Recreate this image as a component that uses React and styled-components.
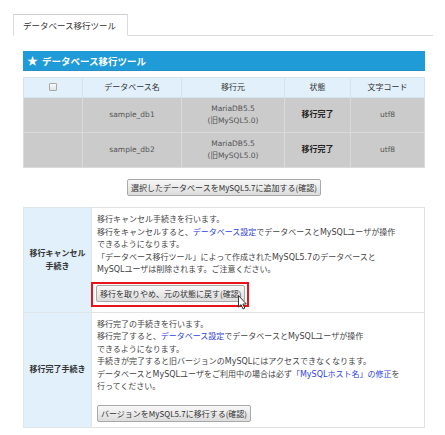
import React from 'react';
import styled, { createGlobalStyle } from 'styled-components';

const GlobalStyle = createGlobalStyle`
  body {
    margin: 0;
    background: #fff;
    font-family: "DejaVu Sans", "Noto Sans CJK JP", sans-serif;
    font-size: 8px;
    color: #444;
  }
`;

const ROWS = [
  { name: 'sample_db1', from: ['MariaDB5.5', '(旧MySQL5.0)'], status: '移行完了', charset: 'utf8' },
  { name: 'sample_db2', from: ['MariaDB5.5', '(旧MySQL5.0)'], status: '移行完了', charset: 'utf8' },
];

const Page = styled.div`
  padding: 14px 12px 12px 13px;
`;

const TabBar = styled.div`
  display: flex;
  border-bottom: 1px solid #dcdcdc;
`;

const Tab = styled.div`
  width: 115px;
  height: 22px;
  margin-bottom: -1px;
  display: flex;
  align-items: center;
  padding-left: 9px;
  box-sizing: border-box;
  background: #fff;
  border: 1px solid #dcdcdc;
  border-bottom-color: #fff;
  border-top-color: #d0d0d0;
  font-family: "Noto Sans CJK JP", sans-serif;
  font-size: 8.5px;
  color: #333;
`;

const Content = styled.div`
  padding: 15px 8px 0 10px;
`;

const Heading = styled.div`
  height: 20px;
  display: flex;
  align-items: center;
  gap: 4px;
  padding-left: 4px;
  background: #1f9bd8;
  border-bottom: 1px solid #2a8fc4;
  box-sizing: border-box;
  color: #fff;
  font-family: "Noto Sans CJK JP", sans-serif;
  font-weight: bold;
  font-size: 9.5px;
`;

const Star = styled.span`
  font-size: 11px;
  line-height: 1;
`;

const ListTable = styled.table`
  width: 100%;
  margin-top: 6px;
  border-collapse: collapse;
  table-layout: fixed;
`;

const HeadCell = styled.th`
  height: 19px;
  padding: 0;
  background: #e1f0fa;
  border: 1px solid #d4e4ee;
  font-weight: normal;
  color: #333;
  text-align: center;
  line-height: 12px;
`;

const Cell = styled.td`
  height: 34px;
  padding: 0;
  background: #cbcbcb;
  border: 1px solid #dadada;
  text-align: center;
  font-size: ${(p) => (p.strong ? '8px' : '7.5px')};
  line-height: 12px;
  color: ${(p) => (p.strong ? '#222' : '#555')};
  font-weight: ${(p) => (p.strong ? 'bold' : 'normal')};
`;

const CheckBox = styled.span`
  display: inline-block;
  width: 6px;
  height: 6px;
  border: 1px solid #a8a8a8;
  border-radius: 1px;
  background: linear-gradient(#fafafa, #e2e2e2);
  vertical-align: middle;
`;

const ButtonRow = styled.div`
  display: flex;
  justify-content: center;
  margin: 11px 0 11px;
`;

const Button = styled.button`
  height: 17px;
  padding: 0 3px;
  border: 1px solid #a9a9a9;
  border-radius: 2px;
  background: linear-gradient(#f8f8f8, #dcdcdc);
  font-family: "Noto Sans CJK JP", sans-serif;
  font-size: 8px;
  color: #333;
  line-height: 15px;
  vertical-align: top;
  cursor: pointer;
`;

const FormTable = styled.table`
  width: 100%;
  border-collapse: collapse;
  table-layout: fixed;
`;

const LabelCell = styled.th`
  width: 67px;
  padding: 0;
  background: #e1f0fa;
  border: 1px solid #dfe6ea;
  font-family: "Noto Sans CJK JP", sans-serif;
  font-weight: bold;
  color: #333;
  text-align: center;
  line-height: 12.5px;
`;

const BodyCell = styled.td`
  padding: 6px 0 5px 5px;
  background: #fff;
  border: 1px solid #e2e2e2;
  vertical-align: top;
  line-height: 12px;
`;

const Text = styled.p`
  margin: 0 0 ${(p) => p.gap}px;
  line-height: 12.5px;
  white-space: nowrap;
  color: #444;
`;

const Link = styled.a`
  color: #2d43e0;
  text-decoration: none;
`;

const Highlight = styled.span`
  position: relative;
  display: inline-block;
  vertical-align: top;
  margin-left: -6px;
  padding: 1px 2px 3px 3px;
  border: 2px solid #e8141a;
`;

const Cursor = styled.svg`
  position: absolute;
  left: 145px;
  top: 11px;
  width: 9px;
  height: 15px;
`;

export default function App() {
  return (
    <Page>
      <GlobalStyle />
      <TabBar>
        <Tab>データベース移行ツール</Tab>
      </TabBar>
      <Content>
        <Heading>
          <Star>★</Star>
          <span>データベース移行ツール</span>
        </Heading>

        <ListTable>
          <colgroup>
            <col style={{ width: 59 }} />
            <col style={{ width: 99 }} />
            <col style={{ width: 103 }} />
            <col style={{ width: 66 }} />
            <col />
          </colgroup>
          <thead>
            <tr>
              <HeadCell><CheckBox /></HeadCell>
              <HeadCell>データベース名</HeadCell>
              <HeadCell>移行元</HeadCell>
              <HeadCell>状態</HeadCell>
              <HeadCell>文字コード</HeadCell>
            </tr>
          </thead>
          <tbody>
            {ROWS.map((r) => (
              <tr key={r.name}>
                <Cell />
                <Cell>{r.name}</Cell>
                <Cell>{r.from[0]}<br />{r.from[1]}</Cell>
                <Cell strong>{r.status}</Cell>
                <Cell>{r.charset}</Cell>
              </tr>
            ))}
          </tbody>
        </ListTable>

        <ButtonRow>
          <Button>選択したデータベースをMySQL5.7に追加する(確認)</Button>
        </ButtonRow>

        <FormTable>
          <tbody>
            <tr>
              <LabelCell>移行キャンセル<br />手続き</LabelCell>
              <BodyCell>
                <Text gap={5}>
                  移行キャンセル手続きを行います。<br />
                  移行をキャンセルすると、<Link href="#">データベース設定</Link>でデータベースとMySQLユーザが操作<br />
                  できるようになります。<br />
                  「データベース移行ツール」によって作成されたMySQL5.7のデータベースと<br />
                  MySQLユーザは削除されます。ご注意ください。
                </Text>
                <Highlight>
                  <Button>移行を取りやめ、元の状態に戻す(確認)</Button>
                  <Cursor viewBox="0 0 9 15">
                    <path d="M0.5 0.5 L0.5 12 L3 9.6 L5 14 L6.8 13.2 L4.9 9 L8.3 9 Z" fill="#fff" stroke="#222" strokeWidth="0.9" strokeLinejoin="round" />
                  </Cursor>
                </Highlight>
              </BodyCell>
            </tr>
            <tr>
              <LabelCell>移行完了手続き</LabelCell>
              <BodyCell>
                <Text gap={11}>
                  移行完了の手続きを行います。<br />
                  移行完了すると、<Link href="#">データベース設定</Link>でデータベースとMySQLユーザが操作<br />
                  できるようになります。<br />
                  手続きが完了すると旧バージョンのMySQLにはアクセスできなくなります。<br />
                  データベースとMySQLユーザをご利用中の場合は必ず<Link href="#">「MySQLホスト名」の修正</Link>を<br />
                  行ってください。
                </Text>
                <Button>バージョンをMySQL5.7に移行する(確認)</Button>
              </BodyCell>
            </tr>
          </tbody>
        </FormTable>
      </Content>
    </Page>
  );
}
